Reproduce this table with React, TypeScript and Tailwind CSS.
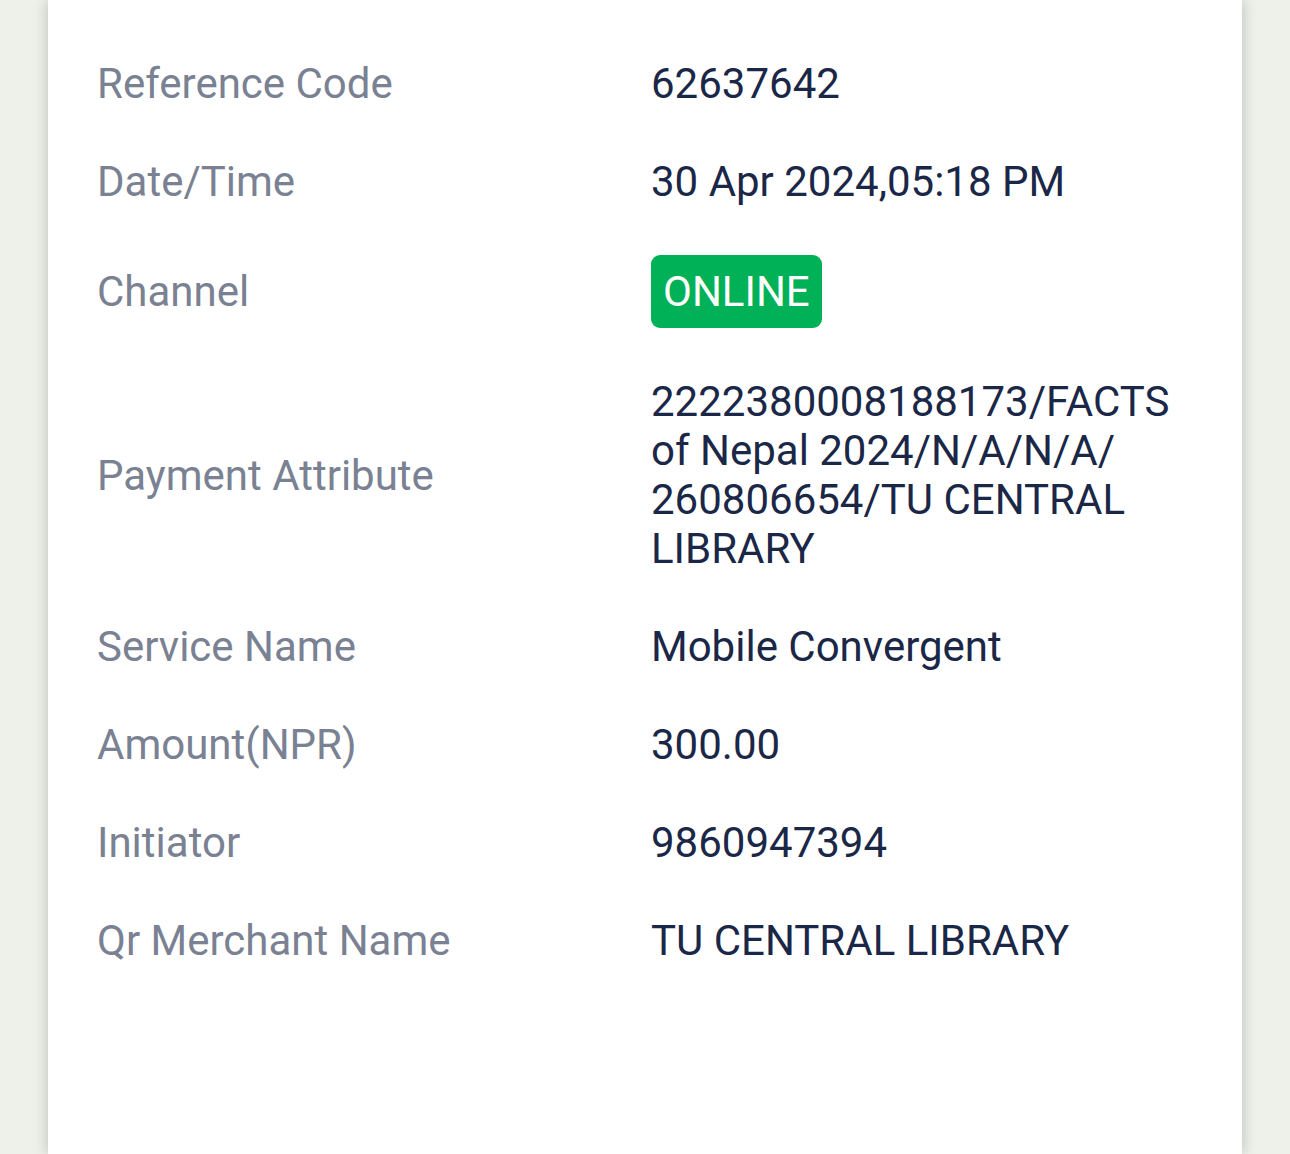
import React from 'react';

const rows: { label: string; value: React.ReactNode }[] = [
  { label: 'Reference Code', value: '62637642' },
  { label: 'Date/Time', value: '30 Apr 2024,05:18 PM' },
  {
    label: 'Channel',
    value: (
      <span className="inline-block rounded-[9px] bg-[#00b157] px-[12px] py-[12px] text-white">ONLINE</span>
    ),
  },
  {
    label: 'Payment Attribute',
    value: (
      <>
        2222380008188173/FACTS
        <br />
        of Nepal 2024/N/A/N/A/
        <br />
        260806654/TU CENTRAL
        <br />
        LIBRARY
      </>
    ),
  },
  { label: 'Service Name', value: 'Mobile Convergent' },
  { label: 'Amount(NPR)', value: '300.00' },
  { label: 'Initiator', value: '9860947394' },
  { label: 'Qr Merchant Name', value: 'TU CENTRAL LIBRARY' },
];

export default function App() {
  return (
    <div className="flex min-h-screen bg-[#eef1ea] px-12 font-['Roboto',sans-serif] text-[42px] leading-[49px]">
      <div className="flex-1 bg-white pl-[49px] pr-[49px] pt-[59px] shadow-[0_0_14px_rgba(0,0,0,0.22)]">
        <div className="flex flex-col gap-[49px]">
          {rows.map((row) => (
            <div key={row.label} className="flex items-center">
              <div className="w-[554px] shrink-0 text-[#7a8192]">{row.label}</div>
              <div className="flex-1 text-[#1b2747]">{row.value}</div>
            </div>
          ))}
        </div>
      </div>
    </div>
  );
}
